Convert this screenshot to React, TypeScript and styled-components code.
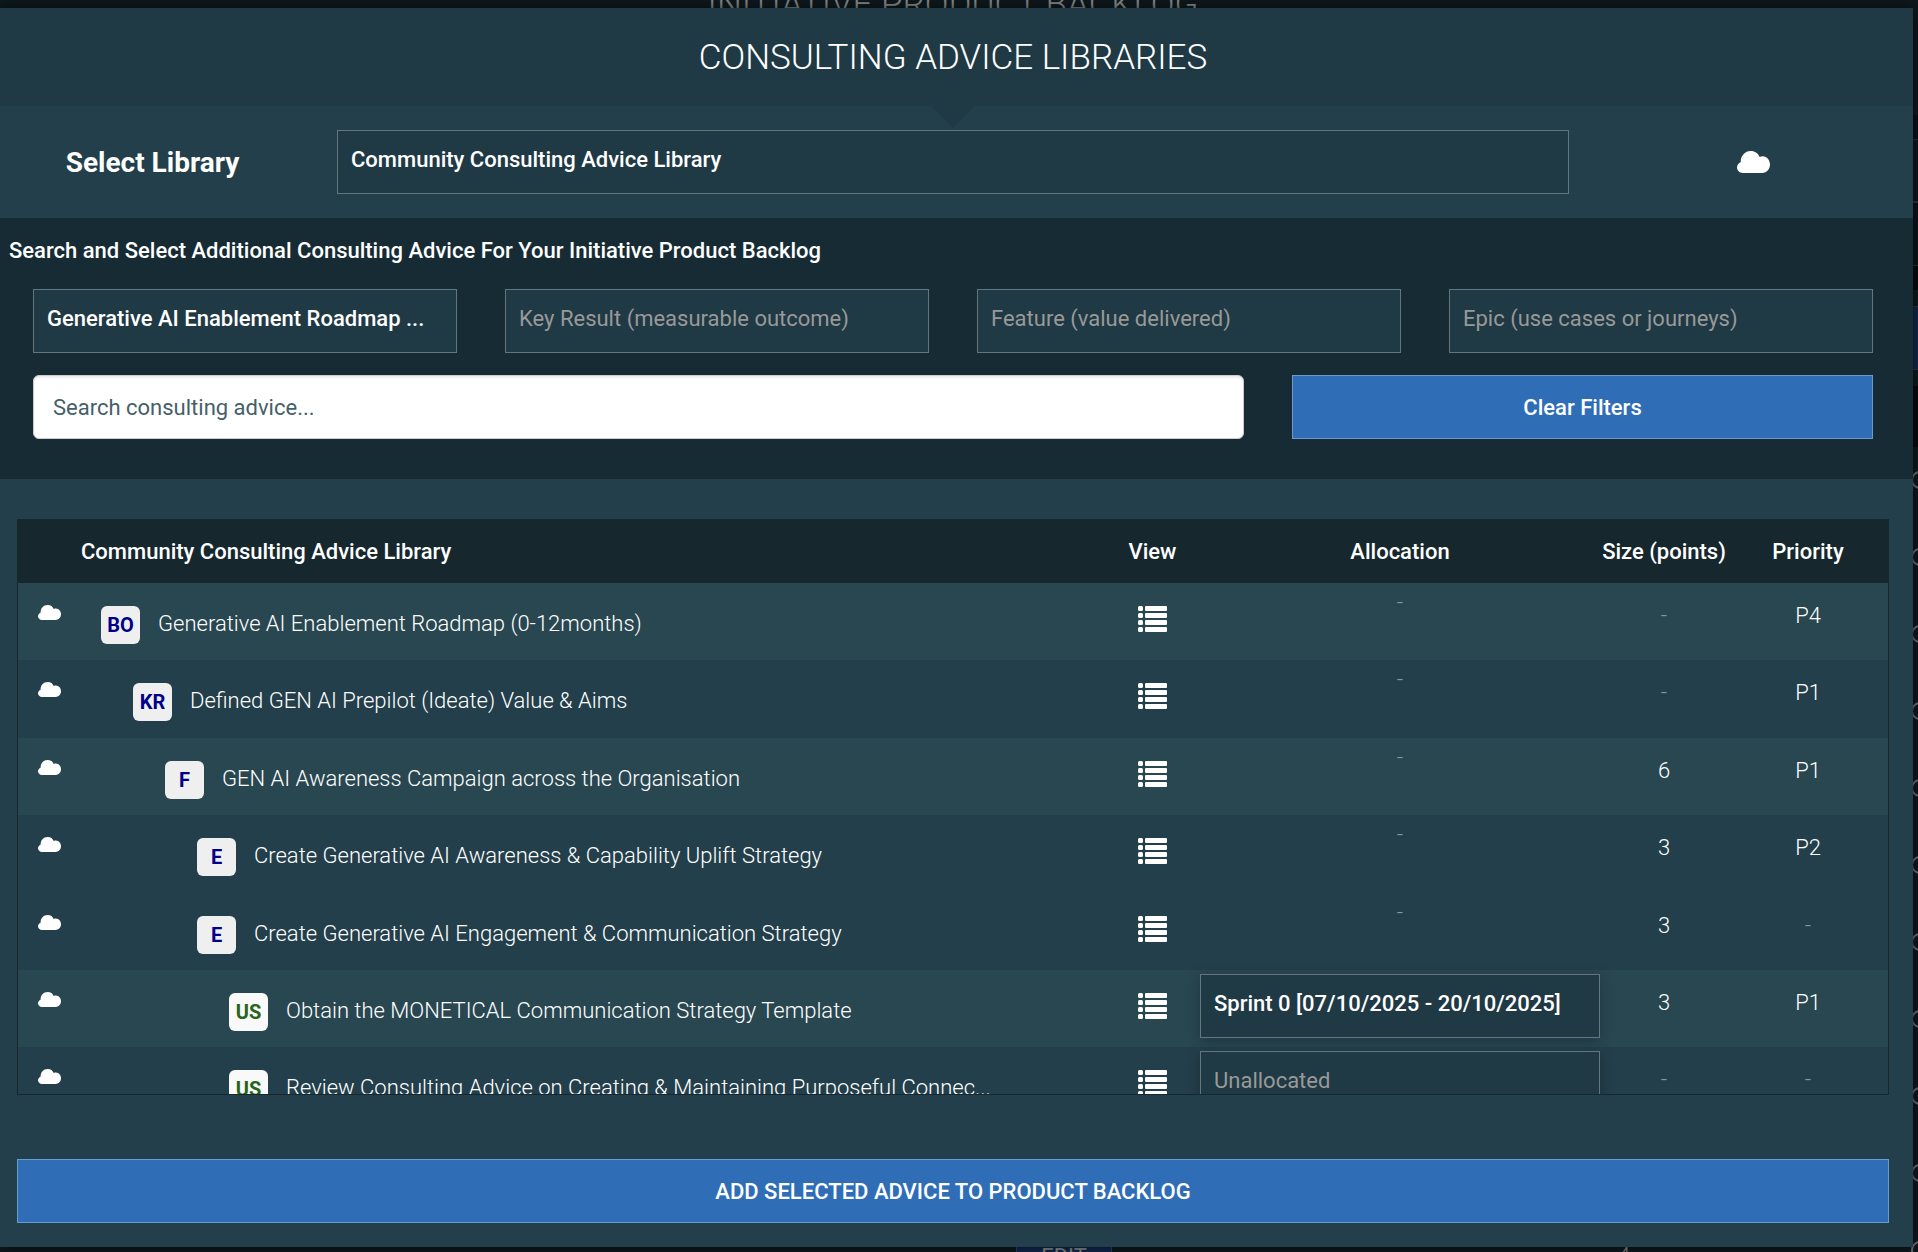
import React, { useId } from "react";
import styled, { createGlobalStyle } from "styled-components";

const GlobalStyle = createGlobalStyle`
  * { box-sizing: border-box; }
  html, body, #root { height: 100%; }
  body {
    margin: 0;
    overflow: hidden;
    background: #0e191d;
    color: #fff;
    font-family: Roboto, "Liberation Sans", sans-serif;
    font-size: 22px;
    line-height: 32px;
  }
`;

/* ---- page behind the dialog ---- */

const Page = styled.div`
  position: relative;
  height: 100%;
  overflow: hidden;
`;

const Backdrop = styled.div`
  position: absolute;
  inset: 0;
  overflow: hidden;
  color: #84898a;
`;

const BackdropTitle = styled.p`
  margin: 0;
  padding-right: 12px;
  text-align: center;
  text-transform: uppercase;
  font-size: 35px;
  font-weight: 300;
  line-height: 10px;
`;

const BackdropBand = styled.div<{ $top: number; $height: number; $color: string; $lined?: boolean }>`
  position: absolute;
  right: 0;
  top: ${(p) => p.$top}px;
  width: 40px;
  height: ${(p) => p.$height}px;
  background: ${(p) => p.$color};
  border: solid #2a3336;
  border-width: ${(p) => (p.$lined ? "1px 0" : "0")};
`;

const BackdropChecks = styled.div`
  position: absolute;
  top: 471px;
  left: calc(100% - 7px);
  display: grid;
  grid-auto-rows: 77px;
`;

const Ring = styled.span`
  width: 18px;
  height: 18px;
  border: 2px solid #6a6f70;
  border-radius: 50%;
`;

const BackdropFooter = styled.div`
  position: absolute;
  left: 1016px;
  top: 1240px;
  width: 96px;
  height: 40px;
  background: #12264a;
  border: 1px solid #2a3f63;
  text-align: center;
  font-size: 22px;
  line-height: 32px;
`;

const BackdropCount = styled.span`
  position: absolute;
  left: 1618px;
  top: 1240px;
  font-weight: 300;
`;

/* ---- dialog ---- */

const Dialog = styled.section`
  position: relative;
  display: flex;
  flex-direction: column;
  margin: 8px 5px 5px 0;
  height: calc(100% - 13px);
  background: #233f4b;
  box-shadow: 0 0 12px rgba(0, 0, 0, 0.6);
`;

const Header = styled.header`
  position: relative;
  padding: 26px 12px 24px 5px;
  background: #1f3945;
  text-align: center;

  &::after {
    content: "";
    position: absolute;
    top: 100%;
    left: calc(50% - 26px);
    border: solid transparent;
    border-width: 22px 22px 0;
    border-top-color: #1f3945;
  }
`;

const Title = styled.h1`
  margin: 0;
  font-size: 35px;
  font-weight: 300;
  line-height: 48px;
  text-transform: uppercase;
`;

const LibraryRow = styled.div`
  display: grid;
  grid-template-columns: 305px minmax(0, 1fr) 320px;
  align-items: center;
  height: 112px;
`;

const LibraryLabel = styled.label`
  padding-top: 2px;
  text-align: center;
  font-size: 28px;
  font-weight: 700;
`;

const LibraryField = styled.div`
  padding: 0 24px 0 32px;
`;

const LibraryIcon = styled.span`
  display: flex;
  justify-content: center;
`;

const SelectBox = styled.select<{ $empty?: boolean }>`
  display: block;
  appearance: none;
  width: 100%;
  height: 64px;
  margin: 0;
  padding: 0 13px 4px;
  border: 1px solid #62777d;
  border-radius: 0;
  background: #1f3945;
  color: ${(p) => (p.$empty ? "#999" : "#fff")};
  font: inherit;
  font-weight: ${(p) => (p.$empty ? 400 : 500)};
  text-overflow: ellipsis;
`;

const SprintSelect = styled(SelectBox)`
  box-shadow: 0 3px 12px rgba(0, 0, 0, 0.25);
`;

const Filters = styled.section`
  padding: 17px 40px 40px 33px;
  background: #172b34;
`;

const FiltersTitle = styled.h2`
  margin: 0 0 22px -24px;
  font-size: 22px;
  font-weight: 500;
  line-height: 32px;
`;

const FilterGrid = styled.div`
  display: grid;
  grid-template-columns: repeat(4, minmax(0, 1fr));
  gap: 22px 48px;
`;

const SearchGrid = styled.div`
  display: grid;
  grid-template-columns: minmax(0, 1211fr) minmax(0, 581fr);
  gap: 48px;
  margin-top: 22px;
`;

const SearchInput = styled.input`
  height: 64px;
  min-width: 0;
  padding: 0 19px;
  border: 1px solid #ccc;
  border-radius: 6px;
  background: #fff;
  box-shadow: inset 0 2px 2px rgba(0, 0, 0, 0.08);
  color: #456069;
  font: inherit;

  &::placeholder { color: #456069; opacity: 1; }
`;

const BlueButton = styled.button`
  width: 100%;
  height: 64px;
  padding: 2px 0 0;
  border: 1px solid #6a9bcd;
  background: #2f6db7;
  color: #fff;
  font: inherit;
  font-weight: 500;
`;

const Results = styled.main`
  display: flex;
  flex: 1;
  min-height: 0;
  flex-direction: column;
  gap: 64px;
  padding: 40px 24px 24px 17px;
`;

const TableFrame = styled.div`
  flex: 1;
  min-height: 0;
  overflow: hidden;
  border: 1px solid #16272e;
  border-top: 0;
`;

const Table = styled.table`
  width: 100%;
  table-layout: fixed;
  border-collapse: collapse;
  font-weight: 300;
`;

const Col = styled.col<{ $width?: number }>`
  width: ${(p) => (p.$width ? p.$width + "px" : "auto")};
`;

const HeadCell = styled.th<{ $left?: boolean }>`
  height: 64px;
  padding: 2px 0 0;
  background: #16272e;
  font-weight: 500;
  text-align: ${(p) => (p.$left ? "left" : "center")};
  white-space: nowrap;
`;

const Row = styled.tr<{ $light: boolean }>`
  height: 77px;
  background: ${(p) => (p.$light ? "#294751" : "#233f4b")};

  &:nth-child(5n + 2), &:nth-child(5n + 4) { height: 78px; }
`;

const Cell = styled.td<{ $top: number }>`
  height: inherit;
  padding: ${(p) => p.$top}px 0 0;
  text-align: center;
  vertical-align: top;
`;

const Dash = styled.span`
  color: #8e9698;
`;

const ItemLine = styled.div<{ $level: number }>`
  display: flex;
  align-items: center;
  gap: 18px;
  height: 38px;
  padding-left: ${(p) => 20 + p.$level * 32}px;
`;

const Badge = styled.span<{ $story: boolean }>`
  flex: none;
  width: 39px;
  height: 38px;
  border-radius: 6px;
  background: ${(p) => (p.$story ? "#f9f9f9" : "#efefef")};
  color: ${(p) => (p.$story ? "#276419" : "#00008b")};
  font-size: 20px;
  font-weight: 700;
  line-height: 38px;
  text-align: center;
`;

const ItemName = styled.span`
  padding-bottom: 2px;
  line-height: 34px;
  white-space: nowrap;
`;

const ViewButton = styled.button`
  display: block;
  margin: 0 auto;
  padding: 0;
  border: 0;
  background: none;
  color: #fff;
`;

const Glyph = styled.svg`
  display: inline-block;
  vertical-align: top;
  fill: #fff;
`;

function Cloud({ width }: { width: number }) {
  return (
    <Glyph width={width} height={Math.round(width * 0.66)} viewBox="0 0 32 22" preserveAspectRatio="none" aria-hidden="true">
      <path d="M5.500 22 C2.500 22 0 19.600 0 16.600 C0 14.200 1.500 12.100 3.600 11.300 C3.400 4.900 7.600 0 13.400 0 C17.500 0 20.600 2.400 21.900 6 C22.900 5.500 24 5.300 25 5.300 C29 5.600 32 9.200 32 13.600 C32 18.400 28.600 22 24.500 22 Z" />
    </Glyph>
  );
}

function ListIcon() {
  return (
    <Glyph width={30} height={28} viewBox="0 0 30 28" aria-hidden="true">
      {[0, 7, 14, 21].map((y) => (
        <g key={y}>
          <rect x="0" y={y + 1} width="5" height="5" rx="1.500" />
          <rect x="7" y={y + 1} width="22" height="5" rx="1" />
        </g>
      ))}
    </Glyph>
  );
}

type Item = {
  kind: string;
  level: number;
  name: string;
  light: boolean;
  allocation?: string;
  size?: string;
  priority?: string;
};

const items: Item[] = [
  { kind: "BO", level: 0, name: "Generative AI Enablement Roadmap (0-12months)", light: true, priority: "P4" },
  { kind: "KR", level: 1, name: "Defined GEN AI Prepilot (Ideate) Value & Aims", light: false, priority: "P1" },
  { kind: "F", level: 2, name: "GEN AI Awareness Campaign across the Organisation", light: true, size: "6", priority: "P1" },
  { kind: "E", level: 3, name: "Create Generative AI Awareness & Capability Uplift Strategy", light: false, size: "3", priority: "P2" },
  { kind: "E", level: 3, name: "Create Generative AI Engagement & Communication Strategy", light: false, size: "3" },
  { kind: "US", level: 4, name: "Obtain the MONETICAL Communication Strategy Template", light: true, allocation: "Sprint 0 [07/10/2025 - 20/10/2025]", size: "3", priority: "P1" },
  { kind: "US", level: 4, name: "Review Consulting Advice on Creating & Maintaining Purposeful Connec...", light: false, allocation: "Unallocated" },
];

const filters = [
  { label: "Business outcome", text: "Generative AI Enablement Roadmap ...", empty: false },
  { label: "Key result", text: "Key Result (measurable outcome)", empty: true },
  { label: "Feature", text: "Feature (value delivered)", empty: true },
  { label: "Epic", text: "Epic (use cases or journeys)", empty: true },
];

function ItemRow({ item }: { item: Item }) {
  return (
    <Row $light={item.light}>
      <Cell $top={22}><Cloud width={23} /></Cell>
      <Cell $top={23}>
        <ItemLine $level={item.level}>
          <Badge $story={item.kind === "US"}>{item.kind}</Badge>
          <ItemName>{item.name}</ItemName>
        </ItemLine>
      </Cell>
      <Cell $top={22}>
        <ViewButton type="button" aria-label={"View " + item.name}><ListIcon /></ViewButton>
      </Cell>
      <Cell $top={4}>
        {item.allocation ? (
          <SprintSelect $empty={item.allocation === "Unallocated"} aria-label={"Allocation of " + item.name}>
            <option>{item.allocation}</option>
          </SprintSelect>
        ) : (
          <Dash>-</Dash>
        )}
      </Cell>
      <Cell $top={17}>{item.size ?? <Dash>-</Dash>}</Cell>
      <Cell $top={17}>{item.priority ?? <Dash>-</Dash>}</Cell>
    </Row>
  );
}

export default function App() {
  const libraryId = useId();
  return (
    <Page>
      <GlobalStyle />
      <Backdrop aria-hidden="true">
        <BackdropTitle>Initiative Product Backlog</BackdropTitle>
        <BackdropBand $top={115} $height={24} $color="#0a1215" />
        <BackdropBand $top={139} $height={63} $color="#0d181c" $lined />
        <BackdropBand $top={202} $height={64} $color="#0b1417" $lined />
        <BackdropBand $top={266} $height={24} $color="#060b0d" />
        <BackdropBand $top={306} $height={64} $color="#12264a" $lined />
        <BackdropBand $top={386} $height={61} $color="#060b0d" />
        <BackdropChecks>
          {Array.from({ length: 11 }, (_, i) => <Ring key={i} />)}
        </BackdropChecks>
        <BackdropFooter>EDIT</BackdropFooter>
        <BackdropCount>4</BackdropCount>
      </Backdrop>

      <Dialog role="dialog" aria-label="Consulting Advice Libraries">
        <Header>
          <Title>Consulting Advice Libraries</Title>
        </Header>

        <LibraryRow>
          <LibraryLabel htmlFor={libraryId}>Select Library</LibraryLabel>
          <LibraryField>
            <SelectBox id={libraryId}>
              <option>Community Consulting Advice Library</option>
            </SelectBox>
          </LibraryField>
          <LibraryIcon><Cloud width={33} /></LibraryIcon>
        </LibraryRow>

        <Filters>
          <FiltersTitle>Search and Select Additional Consulting Advice For Your Initiative Product Backlog</FiltersTitle>
          <FilterGrid>
            {filters.map((f) => (
              <SelectBox key={f.label} $empty={f.empty} aria-label={f.label}>
                <option>{f.text}</option>
              </SelectBox>
            ))}
          </FilterGrid>
          <SearchGrid>
            <SearchInput type="text" aria-label="Search consulting advice" placeholder="Search consulting advice..." />
            <BlueButton type="button">Clear Filters</BlueButton>
          </SearchGrid>
        </Filters>

        <Results>
          <TableFrame>
            <Table>
              <colgroup>
                <Col $width={63} />
                <Col />
                <Col $width={95} />
                <Col $width={400} />
                <Col $width={128} />
                <Col $width={160} />
              </colgroup>
              <thead>
                <tr>
                  <HeadCell />
                  <HeadCell $left scope="col">Community Consulting Advice Library</HeadCell>
                  <HeadCell scope="col">View</HeadCell>
                  <HeadCell scope="col">Allocation</HeadCell>
                  <HeadCell scope="col">Size (points)</HeadCell>
                  <HeadCell scope="col">Priority</HeadCell>
                </tr>
              </thead>
              <tbody>
                {items.map((item) => <ItemRow key={item.name} item={item} />)}
              </tbody>
            </Table>
          </TableFrame>
          <BlueButton type="button">ADD SELECTED ADVICE TO PRODUCT BACKLOG</BlueButton>
        </Results>
      </Dialog>
    </Page>
  );
}
